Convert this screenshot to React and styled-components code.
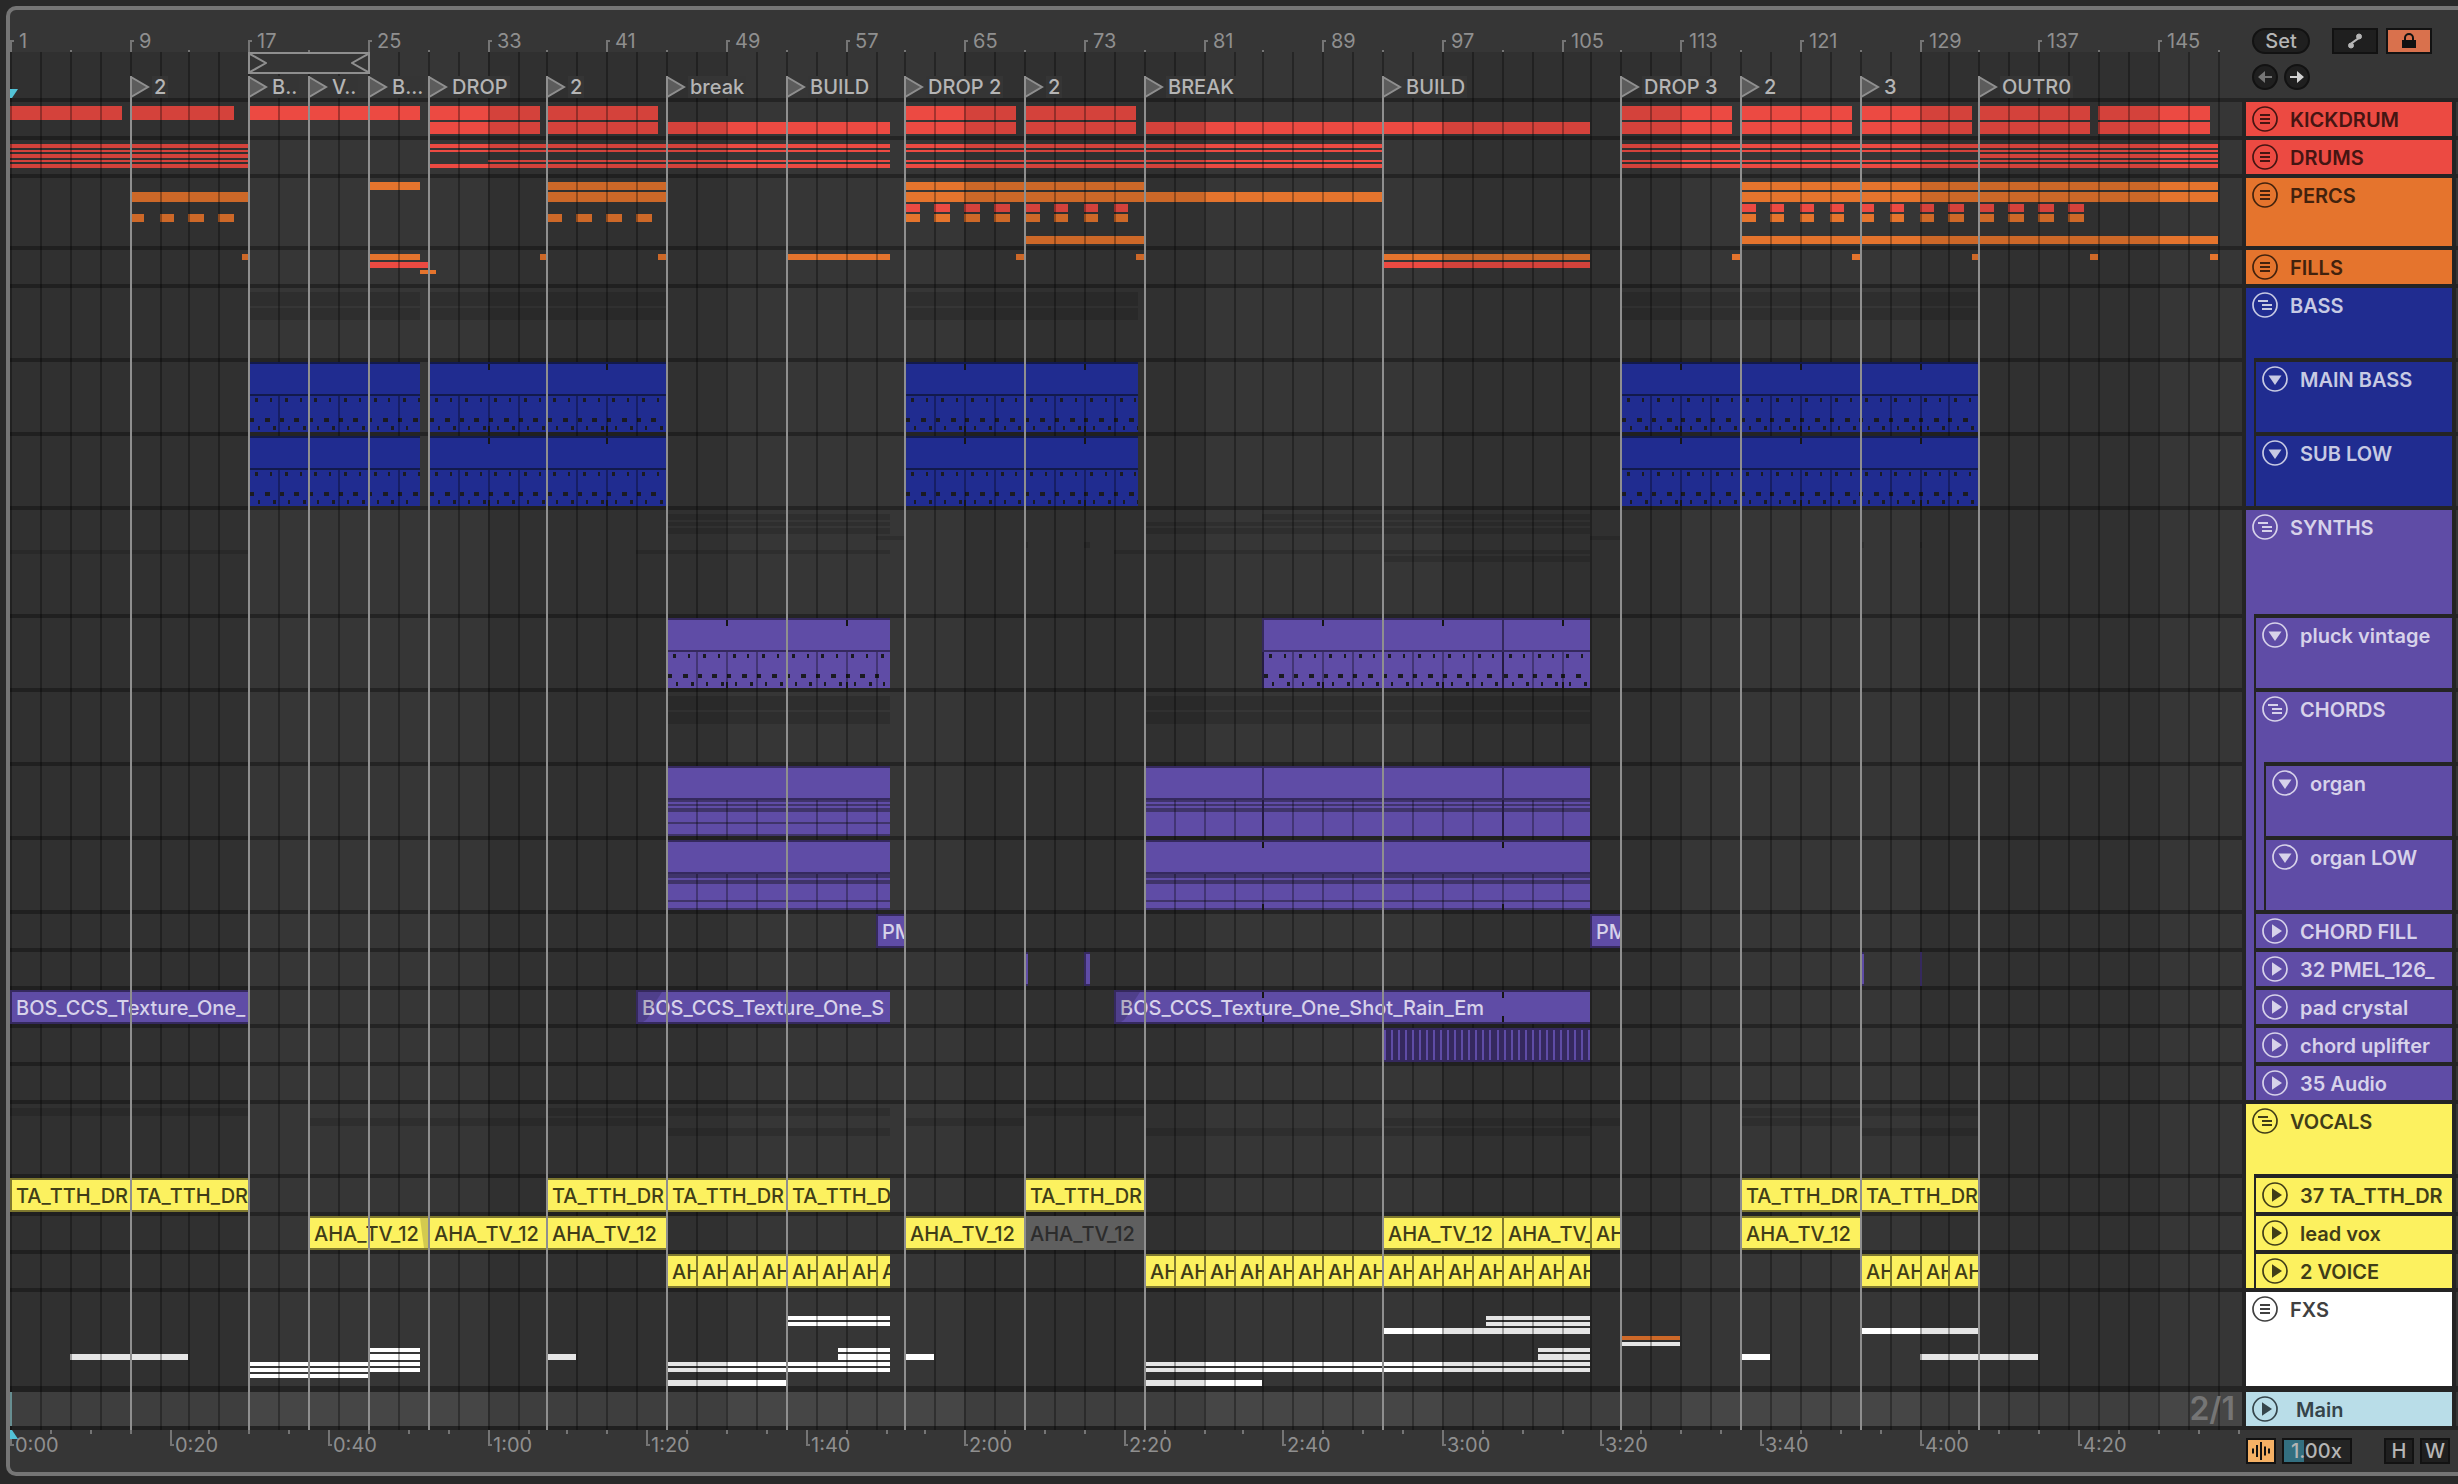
import React from "react";
import styled, { createGlobalStyle } from "styled-components";

/* ---------- palette ---------- */
const C = {
  desk: "#292929",
  frame: "#757575",
  panel: "#363636",
  gap: "#242424",
  line: "#8f8f8f",
  text: "#b5b5b5",
  dim: "#8f8f8f",
  red: "#ec4a42",
  orange: "#e5742d",
  blue: "#202c90",
  purple: "#5f4ca6",
  yellow: "#fcf15f",
  white: "#ffffff",
  main: "#b9dde8",
};

const INK = {
  [C.red]: "#451512",
  [C.orange]: "#42220d",
  [C.blue]: "#c7cae3",
  [C.purple]: "#d7d2ea",
  [C.yellow]: "#403d18",
  [C.white]: "#404040",
  [C.main]: "#35444a",
};

const EDGE = {
  [C.blue]: "#121a4c",
  [C.purple]: "#35295e",
  [C.yellow]: "#7e782f",
};

/* ---------- time to position ---------- */
const BARS_IN_VIEW = 149.65;
const at = (bar) => `round(${(((bar - 1) / BARS_IN_VIEW) * 100).toFixed(4)}%, 2px)`;
const span = (from, to) => ({ left: at(from), width: `calc(${at(to)} - ${at(from)})` });
const every = (from, to, step) => {
  const out = [];
  for (let b = from; b <= to; b += step) out.push(b);
  return out;
};

/* ---------- arrangement data ---------- */
const strip = (top, height, ranges, color) => ({ top, height, ranges, color });
const SHADOW = "rgba(0, 0, 0, 0.14)";
const single = (starts) => starts.map((b) => [b, b + 1]);

const KICK_TAIL = [[61, 68.5], [69, 76.5]];
const KICK_END = [[109, 116.5], [117, 124.5], [125, 132.5], [133, 140.5], [141, 148.5]];
const DRUM_RUN = [[1, 17], [29, 60], [61, 93], [109, 149]];
const BASS_RUN = [[17, 28.5], [29, 45], [61, 76.6], [109, 133]];
const CHORD_RUN = [[45, 60], [77, 107]];
const HITS = [[69, 69.3], [73, 73.35], [125, 125.3], [129, 129.2]];

const BASS_CLIPS = {
  clips: BASS_RUN,
  ticks: [33, 41, 65, 73, 113, 121, 129],
};

const AHA = "AHA_TV_12";
const TTH = "TA_TTH_DR";
const RAIN = "BOS_CCS_Texture_One_";

const TRACKS = [
  {
    name: "KICKDRUM", color: C.red, height: 34, icon: "list",
    strips: [
      strip(4, 14, [[1, 8.5], [9, 16], [17, 28.5], [29, 36.5], [37, 44.5], ...KICK_TAIL, ...KICK_END], C.red),
      strip(20, 12, [[29, 36.5], [37, 44.5], [45, 60], ...KICK_TAIL, [77, 107], ...KICK_END], C.red),
    ],
  },
  {
    name: "DRUMS", color: C.red, height: 34, icon: "list",
    strips: [
      strip(4, 4, DRUM_RUN, C.red),
      strip(10, 2, DRUM_RUN, C.red),
      strip(14, 4, [[1, 17], [133, 149]], C.red),
      strip(20, 2, [[1, 17], [33, 60], [61, 93], [109, 149]], C.red),
      strip(24, 4, DRUM_RUN, C.red),
    ],
  },
  {
    name: "PERCS", color: C.orange, height: 68, icon: "list",
    strips: [
      strip(4, 8, [[25, 28.5], [37, 45], [61, 77], [117, 149]], C.orange),
      strip(14, 10, [[9, 17], [37, 45], [61, 93], [117, 149]], C.orange),
      strip(26, 8, single([...every(61, 75, 2), ...every(117, 139, 2)]), C.red),
      strip(36, 8, single([...every(9, 15, 2), ...every(37, 43, 2), ...every(61, 75, 2), ...every(117, 139, 2)]), C.orange),
      strip(58, 8, [[69, 77], [117, 149]], C.orange),
    ],
  },
  {
    name: "FILLS", color: C.orange, height: 34, icon: "list",
    strips: [
      strip(4, 6, [
        [16.5, 17], [25, 28.5], [36.5, 37], [44.5, 45], [53, 60], [68.5, 69], [76.5, 77], [93, 107],
        [116.5, 117], [124.5, 125], [132.5, 133], [140.5, 141], [148.5, 149],
      ], C.orange),
      strip(12, 6, [[25, 29], [93, 107]], C.red),
      strip(20, 4, [[28.5, 29.5]], C.orange),
    ],
  },
  {
    name: "BASS", color: C.blue, height: 70, icon: "group",
    strips: [strip(4, 14, BASS_RUN, SHADOW), strip(20, 12, BASS_RUN, SHADOW)],
    children: [
      { name: "MAIN BASS", color: C.blue, height: 70, icon: "down", midi: BASS_CLIPS },
      { name: "SUB LOW", color: C.blue, height: 70, icon: "down", midi: BASS_CLIPS },
    ],
  },
  {
    name: "SYNTHS", color: C.purple, height: 104, icon: "group",
    strips: [
      strip(4, 6, [[45, 60], [85, 107]], SHADOW),
      strip(12, 4, CHORD_RUN, SHADOW),
      strip(18, 6, CHORD_RUN, SHADOW),
      strip(26, 4, [[59, 61], [107, 109]], SHADOW),
      strip(32, 6, HITS, SHADOW),
      strip(40, 4, [[1, 17], [43, 60], [75, 107]], SHADOW),
      strip(46, 6, [[93, 107]], SHADOW),
    ],
    children: [
      {
        name: "pluck vintage", color: C.purple, height: 70, icon: "down",
        midi: { clips: [[45, 60], [85, 101], [101, 107]], ticks: [49, 57, 89, 97, 105] },
      },
      {
        name: "CHORDS", color: C.purple, height: 70, icon: "group",
        strips: [strip(4, 14, CHORD_RUN, SHADOW), strip(20, 12, CHORD_RUN, SHADOW)],
        children: [
          {
            name: "organ", color: C.purple, height: 70, icon: "down",
            midi: {
              clips: [
                [45, 60, [[0, 2], [4, 2], [8, 4], [22, 2], [34, 2]]],
                [77, 85, [[0, 2], [4, 2], [8, 4]]],
                [85, 101, [[0, 2], [4, 2], [8, 4]]],
                [101, 107, [[0, 2], [4, 2], [8, 4]]],
              ],
              ticks: [],
            },
          },
          {
            name: "organ LOW", color: C.purple, height: 70, icon: "down",
            midi: {
              clips: [
                [45, 60, [[0, 4], [6, 4], [26, 2], [34, 2]]],
                [77, 107, [[0, 4], [6, 4], [26, 2], [34, 2]]],
              ],
              ticks: [85, 101],
            },
          },
        ],
      },
      { name: "CHORD FILL", color: C.purple, height: 34, icon: "play", audio: [[59, 61, "PM"], [107, 109, "PM"]] },
      { name: "32 PMEL_126_", color: C.purple, height: 34, icon: "play", audio: HITS },
      {
        name: "pad crystal", color: C.purple, height: 34, icon: "play",
        audio: [
          [1, 17, RAIN],
          [43, 60, RAIN + "S", { fadeIn: true }],
          [75, 107, RAIN + "Shot_Rain_Em", { fadeIn: true }],
        ],
        ticks: [85, 101],
      },
      { name: "chord uplifter", color: C.purple, height: 34, icon: "play", pulses: [[93, 107, 30]] },
      { name: "35 Audio", color: C.purple, height: 34, icon: "play" },
    ],
  },
  {
    name: "VOCALS", color: C.yellow, height: 70, icon: "group",
    strips: [
      strip(4, 8, [[1, 17], [37, 60], [69, 77], [117, 133]], SHADOW),
      strip(14, 8, [[21, 45], [61, 69], [93, 109], [117, 125]], SHADOW),
      strip(24, 8, [[45, 60], [77, 107], [125, 133]], SHADOW),
    ],
    children: [
      {
        name: "37 TA_TTH_DR", color: C.yellow, height: 34, icon: "play",
        audio: [[1, 9], [9, 17], [37, 45], [45, 53], [53, 60], [69, 77], [117, 125], [125, 133]].map(([a, b]) => [a, b, TTH]),
      },
      {
        name: "lead vox", color: C.yellow, height: 34, icon: "play",
        audio: [
          [21, 29, AHA, { fadeOut: true }], [29, 37, AHA], [37, 45, AHA], [61, 69, AHA], [69, 77, AHA, { muted: true }],
          [93, 101, AHA], [101, 107, "AHA_TV_"], [107, 109, "AH"], [117, 125, AHA],
        ],
      },
      {
        name: "2 VOICE", color: C.yellow, height: 34, icon: "play",
        audio: [...every(45, 59, 2), ...every(77, 105, 2), ...every(125, 131, 2)].map((b) => [b, b === 59 ? 60 : b + 2, "AH"]),
      },
    ],
  },
  {
    name: "FXS", color: C.white, height: 94, icon: "list",
    strips: [
      strip(24, 4, [[53, 60], [100, 107]], C.white),
      strip(30, 4, [[53, 60], [100, 107]], C.white),
      strip(36, 6, [[93, 107], [125, 133]], C.white),
      strip(44, 4, [[109, 113]], C.orange),
      strip(50, 4, [[109, 113]], C.white),
      strip(56, 4, [[25, 28.5], [56.5, 60], [103.5, 107]], C.white),
      strip(62, 6, [[5, 13], [25, 28.5], [37, 39], [56.5, 60], [61, 63], [103.5, 107], [117, 119], [129, 137]], C.white),
      strip(70, 4, [[17, 28.5], [45, 60], [77, 107]], C.white),
      strip(76, 4, [[17, 28.5], [45, 60], [77, 107]], C.white),
      strip(82, 4, [[17, 25]], C.white),
      strip(88, 6, [[45, 53], [77, 85]], C.white),
    ],
  },
];

const flatten = (tracks) => tracks.flatMap((t) => [t, ...flatten(t.children || [])]);
const LANES = flatten(TRACKS);

const LOCATORS = [
  [9, "2"], [17, "B.."], [21, "V.."], [25, "B..."], [29, "DROP"], [37, "2"], [45, "break"], [53, "BUILD"],
  [61, "DROP 2"], [69, "2"], [77, "BREAK"], [93, "BUILD"], [109, "DROP 3"], [117, "2"], [125, "3"], [133, "OUTR0"],
];

const BARS_PER_SECOND = 32 / 60;
const SECONDS = every(0, 280, 5);
const clock = (s) => `${Math.floor(s / 60)}:${String(s % 60).padStart(2, "0")}`;

/* ---------- page ---------- */
const Global = createGlobalStyle`
  *, *::before, *::after { box-sizing: border-box; }
  body { margin: 0; background: ${C.desk}; }
  body, button, input { font-family: Inter, "Liberation Sans", sans-serif; font-size: 20px; font-weight: 500; }
  button { padding: 0; color: inherit; }
`;

const Desk = styled.main`
  min-height: 100vh;
  padding: 6px 0 8px 6px;
  background: ${C.desk};
  display: flex;
`;

const Frame = styled.section`
  flex: 1;
  min-width: 0;
  display: grid;
  grid-template-columns: minmax(0, 1fr) 216px;
  align-content: start;
  border: 4px solid ${C.frame};
  border-right: 0;
  border-radius: 10px 0 0 10px;
  background: ${C.panel};
  color: ${C.text};
  overflow: hidden;
`;

const Column = styled.div`
  display: flex;
  flex-direction: column;
  min-width: 0;
`;

/* ---------- rulers ---------- */
const BarRuler = styled.div`
  position: relative;
  height: 42px;
`;

const TimeRuler = styled.div`
  position: relative;
  height: 42px;
  overflow: hidden;
`;

const BarMark = styled.span`
  position: absolute;
  bottom: 0;
  height: ${(p) => (p.$major ? 12 : 2)}px;
  width: ${(p) => (p.$major ? 4 : 2)}px;
  border-left: 2px solid ${C.frame};
  border-top: ${(p) => (p.$major ? `2px solid ${C.frame}` : "0")};
`;

const BarNumber = styled.span`
  position: absolute;
  bottom: 0;
  padding-left: 9px;
  line-height: 22px;
  color: ${C.dim};
  font-weight: 400;
`;

const TimeMark = styled.span`
  position: absolute;
  top: 0;
  height: ${(p) => (p.$major ? 16 : 4)}px;
  width: ${(p) => (p.$major ? 4 : 2)}px;
  border-left: 2px solid ${C.frame};
  border-bottom: ${(p) => (p.$major ? `2px solid ${C.frame}` : "0")};
`;

const TimeNumber = styled.span`
  position: absolute;
  top: 4px;
  padding-left: 5px;
  line-height: 22px;
  color: ${C.dim};
  font-weight: 400;
`;

const PlayMarker = styled.svg`
  position: absolute;
  left: 0;
  ${(p) => p.$edge}: 0;
  width: 8px;
  height: 9px;
  z-index: 7;
  fill: #52c2d6;
`;

/* ---------- canvas ---------- */
const Canvas = styled.div`
  position: relative;
  isolation: isolate;
`;

const Scrub = styled.div`
  position: relative;
  height: 46px;
  background: ${C.panel};
`;

const LoopBrace = styled.div`
  position: absolute;
  top: 0;
  height: 22px;
  z-index: 4;
  display: flex;
  justify-content: space-between;
  border: 2px solid ${C.line};
  background: #343434;
`;

const Chevron = styled.svg`
  width: 17px;
  height: 18px;
  fill: none;
  stroke: ${C.line};
  stroke-width: 2;
`;

const Locator = styled.button`
  position: absolute;
  top: 24px;
  height: 22px;
  z-index: 6;
  display: flex;
  align-items: center;
  gap: 2px;
  border: 0;
  background: none;
  color: ${C.text};
  line-height: 22px;
  white-space: nowrap;
`;

const Flag = styled.svg`
  width: 20px;
  height: 22px;
  fill: #5c5c5c;
  stroke: ${C.line};
  stroke-width: 2;
`;

const LocatorName = styled.span`
  padding: 0 2px;
  background: #353535;
`;

const LocatorLine = styled.div`
  position: absolute;
  top: 24px;
  bottom: 0;
  width: 2px;
  z-index: 5;
  background: ${C.line};
`;

const Shade = styled.div`
  position: absolute;
  top: 0;
  bottom: 0;
  z-index: 1;
  background: rgba(0, 0, 0, 0.1);
`;

const GridLine = styled.div`
  position: absolute;
  top: 0;
  bottom: 0;
  width: 2px;
  z-index: 3;
  background: rgba(0, 0, 0, 0.3);
`;

const Lanes = styled.div`
  display: flex;
  flex-direction: column;
  gap: 4px;
  padding: 4px 0;
  background: ${C.gap};
`;

const Lane = styled.div`
  position: relative;
  height: ${(p) => p.$height}px;
  background: ${C.panel};
  overflow: hidden;
`;

const MainLane = styled(Lane)`
  display: flex;
  align-items: center;
  justify-content: flex-end;
  margin-top: 2px;
  padding-right: 7px;
  background: #464646;
  border-left: 2px solid #a5e4e8;
`;

const GridSize = styled.span`
  position: relative;
  z-index: 4;
  color: #757575;
  font-size: 32px;
  font-weight: 600;
  line-height: 34px;
`;

const Strip = styled.div`
  position: absolute;
  top: ${(p) => p.$top}px;
  height: ${(p) => p.$height}px;
  background: ${(p) => p.$color};
`;

const MidiBox = styled.div`
  position: absolute;
  top: 0;
  height: 70px;
`;

const MidiTitle = styled.div`
  position: relative;
  z-index: 4;
  height: 34px;
  background: ${(p) => p.$color};
  border: 2px solid ${(p) => EDGE[p.$color]};
  border-right: 0;
`;

const MidiNotes = styled.svg`
  position: relative;
  z-index: 2;
  display: block;
  width: 100%;
  height: 36px;
  background: ${(p) => p.$color};
  border-left: 2px solid ${(p) => EDGE[p.$color]};
  shape-rendering: crispEdges;
`;

const LoopTick = styled.div`
  position: absolute;
  ${(p) => p.$edge}: ${(p) => p.$inset}px;
  width: 2px;
  height: 6px;
  z-index: 4;
  background: #161616;
`;

const AudioBox = styled.div`
  position: absolute;
  top: 0;
  height: 34px;
  z-index: 4;
  overflow: hidden;
  padding-left: ${(p) => (p.$bare ? 0 : 4)}px;
  border: 2px solid ${(p) => (p.$muted ? "#5f5f5f" : EDGE[p.$color])};
  border-right: 0;
  background: ${(p) => (p.$muted ? "#5f5f5f" : p.$color)};
  color: ${(p) => (p.$muted ? "#2c2c2c" : INK[p.$color])};
  font-weight: 500;
  line-height: 32px;
  white-space: nowrap;
`;

const Fade = styled.svg`
  position: absolute;
  top: 0;
  ${(p) => p.$side}: 0;
  width: ${(p) => (p.$side === "left" ? 24 : 8)}px;
  height: 30px;
  fill: rgba(0, 0, 0, 0.16);
`;

const Pulses = styled.div`
  position: absolute;
  top: 0;
  height: 34px;
  z-index: 4;
  display: flex;
  justify-content: space-between;
  padding: 2px 0 2px 2px;
  background: ${EDGE[C.purple]};
`;

const Pulse = styled.div`
  width: 2px;
  background: ${C.purple};
`;

/* ---------- right column ---------- */
const Controls = styled.div`
  height: 88px;
  padding: 18px 26px 0 10px;
  display: flex;
  flex-direction: column;
  gap: 10px;
`;

const Footer = styled.div`
  height: 42px;
  padding: 8px 8px 0 4px;
  display: flex;
  gap: 6px;
`;

const ControlRow = styled.div`
  display: flex;
  align-items: center;
  gap: ${(p) => p.$gap}px;
`;

const Tool = styled.button`
  display: flex;
  align-items: center;
  justify-content: center;
  width: ${(p) => p.$width}px;
  height: 26px;
  flex: none;
  border: 2px solid #121212;
  border-radius: ${(p) => (p.$round ? 13 : 0)}px;
  background: ${(p) => p.$fill || "#1f1f1f"};
  color: ${(p) => p.$ink || C.text};
  line-height: 22px;
  margin-left: ${(p) => (p.$push ? "auto" : 0)};
`;

const ZoomField = styled.input`
  width: 70px;
  height: 26px;
  padding: 0 0 0 7px;
  border: 2px solid #121212;
  border-radius: 0;
  background: linear-gradient(90deg, #336f80 20px, #242424 20px);
  color: ${C.text};
`;

const HeaderArea = styled.div`
  display: flex;
  gap: 4px;
  padding: 4px 0 4px 4px;
  background: ${C.gap};
`;

const HeaderList = styled.div`
  flex: 1;
  min-width: 0;
  display: flex;
  flex-direction: column;
  gap: 4px;
`;

const Group = styled.div`
  background: ${(p) => p.$color};
`;

const GroupChildren = styled.div`
  display: flex;
  flex-direction: column;
  gap: 4px;
  margin-left: 8px;
  padding: 4px 0 0 2px;
  background: ${C.gap};
`;

const Header = styled.div`
  display: flex;
  align-items: flex-start;
  gap: ${(p) => (p.$wide ? 18 : 12)}px;
  height: ${(p) => p.$height}px;
  margin-top: ${(p) => (p.$wide ? 2 : 0)}px;
  padding: 4px 0 0 6px;
  background: ${(p) => p.$color};
  color: ${(p) => INK[p.$color]};
  overflow: hidden;
`;

const FoldButton = styled.button`
  width: 26px;
  height: 26px;
  flex: none;
  border: 0;
  background: none;
`;

const TrackName = styled.span`
  font-weight: 600;
  line-height: 28px;
  white-space: nowrap;
`;

const EdgeList = styled.div`
  width: 2px;
  display: flex;
  flex-direction: column;
  gap: 4px;
`;

const EdgeCell = styled.div`
  height: ${(p) => p.$height}px;
  background: ${C.panel};
  margin-top: ${(p) => (p.$wide ? 2 : 0)}px;
`;

/* ---------- icons ---------- */
function TrackIcon({ kind }) {
  return (
    <svg width="26" height="26" viewBox="0 0 26 26" fill="none" stroke="currentColor" strokeWidth="2" display="block">
      <circle cx="13" cy="13" r="12" strokeWidth="1.7" />
      {kind === "list" && <path d="M8 9h10M8 13h10M8 17h10" />}
      {kind === "group" && <path d="M6 9h10M10 13h10M10 17h10" />}
      {kind === "down" && <path d="M6.5 9.5h13L13 19z" fill="currentColor" stroke="none" />}
      {kind === "play" && <path d="M10 6.2v13.6L20 13z" fill="currentColor" stroke="none" />}
    </svg>
  );
}

function ArrowIcon({ back }) {
  return (
    <svg width="18" height="18" viewBox="0 0 18 18" fill="currentColor">
      <path
        transform={back ? "matrix(-1 0 0 1 18 0)" : undefined}
        d="M2 8h7V3l7 6-7 6v-5H2z"
      />
    </svg>
  );
}

function AutomationIcon() {
  return (
    <svg width="18" height="18" viewBox="0 0 18 18" fill="currentColor" stroke="currentColor">
      <path d="M5 13.5L6 11l6-4.500 1-2.500" fill="none" strokeWidth="2" />
      <circle cx="5" cy="13.500" r="2.500" />
      <circle cx="13" cy="4.500" r="2.500" />
    </svg>
  );
}

function LockIcon() {
  return (
    <svg width="18" height="18" viewBox="0 0 18 18">
      <rect x="2" y="8" width="14" height="8" fill="#111" />
      <path d="M5 9V6a4 4 0 0 1 8 0v3" fill="none" stroke="#111" strokeWidth="2" />
    </svg>
  );
}

function WaveIcon() {
  return (
    <svg width="20" height="18" viewBox="0 0 20 18" stroke="#111" strokeWidth="2">
      <path d="M2 6.500v5M6 3v12M10 0v18M14 4.500v9M18 6.500v5" />
    </svg>
  );
}

/* ---------- parts ---------- */
function NoteDrawing({ from, to, color, bands }) {
  const length = to - from;
  const pct = (b) => `${((b / length) * 100).toFixed(3)}%`;
  if (bands) {
    return (
      <MidiNotes $color={color}>
        {bands.map(([y, h]) => (
          <rect key={y} x="0" y={y} width="100%" height={h} fill="#3f3469" />
        ))}
      </MidiNotes>
    );
  }
  return (
    <MidiNotes $color={color}>
      {every(0, length - 0.4, 1).map((b) => (
        <g key={b} fill="#1b1b22">
          <rect x={pct(b + 0.36)} y="2" width={b % 2 ? 2 : 3} height="4" />
          <rect x={pct(b)} y="22" width={b % 2 ? 5 : 4} height="4" />
          <rect x={pct(b + 0.56)} y="30" width={b % 2 ? 3 : 2} height="4" />
        </g>
      ))}
    </MidiNotes>
  );
}

function TrackLane({ track }) {
  const { color, height, strips = [], midi, audio = [], pulses = [], ticks = [] } = track;
  const marks = midi ? midi.ticks : ticks;
  return (
    <Lane $height={height}>
      {strips.map((s) =>
        s.ranges.map(([a, b]) => (
          <Strip key={`${s.top}-${a}`} $top={s.top} $height={s.height} $color={s.color} style={span(a, b)} />
        ))
      )}
      {midi &&
        midi.clips.map(([a, b, bands]) => (
          <MidiBox key={a} style={span(a, b)}>
            <MidiTitle $color={color} />
            <NoteDrawing from={a} to={b} color={color} bands={bands} />
          </MidiBox>
        ))}
      {audio.map(([a, b, label, opts = {}]) => (
        <AudioBox key={a} $color={color} $muted={opts.muted} $bare={!label} style={span(a, b)}>
          {opts.fadeIn && (
            <Fade $side="left" viewBox="0 0 24 30"><path d="M0 0h24Q18 8 14 18T5 30H0z" /></Fade>
          )}
          {opts.fadeOut && (
            <Fade $side="right" viewBox="0 0 8 30"><path d="M0 0h8v30H4Q2 16 0 0z" /></Fade>
          )}
          {label}
        </AudioBox>
      ))}
      {pulses.map(([a, b, n]) => (
        <Pulses key={a} style={span(a, b)}>
          {every(1, n, 1).map((i) => <Pulse key={i} />)}
        </Pulses>
      ))}
      {marks.map((b) => (
        <React.Fragment key={b}>
          <LoopTick $edge="top" $inset={2} style={{ left: at(b) }} />
          <LoopTick $edge="bottom" $inset={midi ? 0 : 2} style={{ left: at(b) }} />
        </React.Fragment>
      ))}
    </Lane>
  );
}

function TrackHeader({ track }) {
  const head = (
    <Header $color={track.color} $height={track.height}>
      <FoldButton aria-label={track.name}><TrackIcon kind={track.icon} /></FoldButton>
      <TrackName>{track.name}</TrackName>
    </Header>
  );
  if (!track.children) return head;
  return (
    <Group $color={track.color}>
      {head}
      <GroupChildren>
        {track.children.map((t) => <TrackHeader key={t.name} track={t} />)}
      </GroupChildren>
    </Group>
  );
}

export default function App() {
  return (
    <Desk>
      <Global />
      <Frame>
        <Column>
          <BarRuler>
            {every(1, 149, 4).map((b) => (
              <BarMark key={b} $major={b % 8 === 1} style={{ left: at(b) }} />
            ))}
            {every(1, 145, 8).map((b) => (
              <BarNumber key={b} style={{ left: at(b) }}>{b}</BarNumber>
            ))}
          </BarRuler>
          <Canvas>
            <Scrub>
              <LoopBrace style={{ left: at(17), width: `calc(${at(25)} - ${at(17)} + 2px)` }}>
                <Chevron viewBox="0 0 17 18"><path d="M0 0l16 9-16 9" /></Chevron>
                <Chevron viewBox="0 0 17 18"><path d="M17 0L1 9l16 9" /></Chevron>
              </LoopBrace>
              {LOCATORS.map(([b, name]) => (
                <Locator key={b} style={{ left: at(b) }}>
                  <Flag viewBox="0 0 20 22"><path d="M1 1l17 10L1 21z" /></Flag>
                  <LocatorName>{name}</LocatorName>
                </Locator>
              ))}
              <PlayMarker $edge="bottom" viewBox="0 0 8 9"><path d="M0 0h8L2 9H0z" /></PlayMarker>
            </Scrub>
            <Lanes>
              {LANES.map((t) => <TrackLane key={t.name} track={t} />)}
              <MainLane $height={34}><GridSize>2/1</GridSize></MainLane>
            </Lanes>
            {every(1, 129, 32).map((b) => <Shade key={b} style={span(b, b + 16)} />)}
            {every(1, 149, 2).map((b) => <GridLine key={b} style={{ left: at(b) }} />)}
            {LOCATORS.map(([b]) => <LocatorLine key={b} style={{ left: at(b) }} />)}
          </Canvas>
          <TimeRuler>
            <PlayMarker $edge="top" viewBox="0 0 8 9"><path d="M0 0h2l6 9H0z" /></PlayMarker>
            {SECONDS.map((s) => (
              <TimeMark key={s} $major={s % 20 === 0 && s < 280} style={{ left: at(1 + s * BARS_PER_SECOND) }} />
            ))}
            {SECONDS.filter((s) => s % 20 === 0 && s < 280).map((s) => (
              <TimeNumber key={s} style={{ left: at(1 + s * BARS_PER_SECOND) }}>{clock(s)}</TimeNumber>
            ))}
          </TimeRuler>
        </Column>

        <Column>
          <Controls>
            <ControlRow $gap={8}>
              <Tool $width={58} $round>Set</Tool>
              <Tool $width={46} $push aria-label="Automation"><AutomationIcon /></Tool>
              <Tool $width={46} $fill="#d9714d" aria-label="Lock"><LockIcon /></Tool>
            </ControlRow>
            <ControlRow $gap={6}>
              <Tool $width={26} $round $ink="#757575" aria-label="Previous"><ArrowIcon back /></Tool>
              <Tool $width={26} $round $ink="#d0d0d0" aria-label="Next"><ArrowIcon /></Tool>
            </ControlRow>
          </Controls>
          <HeaderArea>
            <HeaderList>
              {TRACKS.map((t) => <TrackHeader key={t.name} track={t} />)}
              <Header $color={C.main} $height={34} $wide>
                <FoldButton aria-label="Main"><TrackIcon kind="play" /></FoldButton>
                <TrackName>Main</TrackName>
              </Header>
            </HeaderList>
            <EdgeList>
              {LANES.map((t) => <EdgeCell key={t.name} $height={t.height} />)}
              <EdgeCell $height={34} $wide />
            </EdgeList>
          </HeaderArea>
          <Footer>
            <Tool $width={30} $fill="#f6b165" aria-label="Waveforms"><WaveIcon /></Tool>
            <ZoomField aria-label="Zoom" defaultValue="1.00x" />
            <Tool $width={30} $push>H</Tool>
            <Tool $width={30}>W</Tool>
          </Footer>
        </Column>
      </Frame>
    </Desk>
  );
}
